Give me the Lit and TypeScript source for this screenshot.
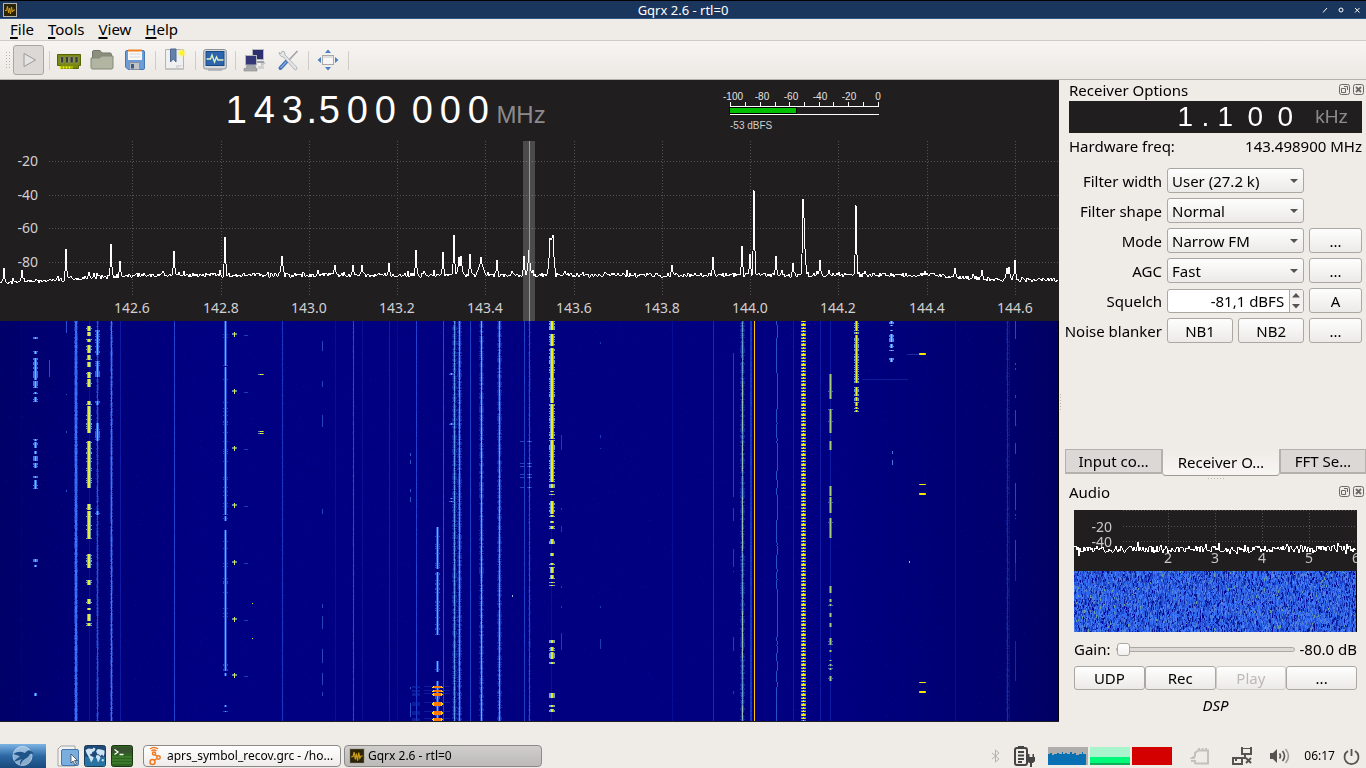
import { LitElement, html, svg, css } from "lit";
import { customElement } from "lit/decorators.js";

/* Deterministic noise source shared by the plots. */
function noise(seed: number) {
  let s = seed;
  return () => {
    s = (s * 1664525 + 1013904223) >>> 0;
    return s / 4294967296;
  };
}

type Peak = [x: number, y: number, half?: number];
type Seg = [from: number, to: number];

const PEAKS: Peak[] = [
  [4, 127], [22, 129], [66, 108], [89, 131], [111, 103], [120, 120], [174, 110], [225, 96],
  [282, 115, 2], [335, 124], [353, 124], [362, 124], [389, 122], [416, 109], [443, 111],
  [454, 94, 1], [459, 116, 2], [461, 115, 2], [470, 113], [481, 116, 4], [497, 119], [524, 115],
  [529, 109, 2], [550, 97, 2], [551, 99, 2], [552, 97, 2], [553, 94, 2], [672, 124], [713, 116], [742, 105, 1], [750, 113, 1],
  [754, 49], [776, 115], [793, 122], [803, 58, 1], [804, 77, 2], [820, 119], [829, 129],
  [856, 64, 1], [955, 127], [982, 129], [1007, 127, 2], [1009, 126, 2], [1015, 119],
];

function spectrumPoints(): string {
  const rnd = noise(7);
  const pts: string[] = [];
  for (let x = 0; x < 1059; x++) {
    let base = 134;
    if (x < 140) base = 142 - (x / 140) * 8;
    if (x > 940) base = 135 + Math.min(4, (x - 940) / 16);
    let y = base + rnd() * 4 - 2 - (rnd() > 0.94 ? 3 : 0);
    for (const [px, py, half = 1] of PEAKS) {
      const d = Math.abs(x - px);
      if (d <= half) y = Math.min(y, d === 0 ? py : base - (base - py) * (1 - d / (half + 0.6)) * 0.75);
    }
    pts.push(`${x},${Math.round(y)}`);
  }
  return pts.join(" ");
}

function audioPoints(): string {
  const rnd = noise(31);
  const pts: string[] = [];
  for (let x = 0; x < 283; x++) {
    const y = 39 + (rnd() - 0.5) * 7 + (rnd() > 0.85 ? (rnd() - 0.5) * 11 : 0);
    pts.push(`${x},${Math.round(y)}`);
  }
  return pts.join(" ");
}

const SPECTRUM = spectrumPoints();
const AUDIO = audioPoints();

/* Steady carriers: x, width, colour, strength, side fuzz. */
const CARRIERS: [number, number, string, number, number][] = [
  [75, 2, "58,122,255", 1, 0.7], [97, 1, "80,140,240", 0.65, 0.5], [111, 1, "70,130,255", 1, 0.7],
  [120, 1, "20,40,190", 0.7, 0], [174, 1, "40,80,225", 0.9, 0], [282, 1, "30,60,200", 0.95, 0.15],
  [335, 1, "14,24,160", 0.7, 0], [353, 1, "40,90,235", 0.9, 0.15], [362, 1, "14,24,160", 0.7, 0],
  [389, 1, "20,36,175", 0.9, 0], [397, 1, "14,24,160", 0.5, 0], [416, 1, "40,80,225", 0.9, 0],
  [443, 1, "40,90,235", 0.9, 0], [454, 1, "95,160,235", 1, 0.8], [459, 1, "95,160,235", 1, 0.8],
  [470, 1, "36,76,220", 0.9, 0], [481, 1, "130,185,210", 1, 0.8], [499, 1, "110,165,240", 1, 0.8],
  [524, 1, "36,76,220", 0.9, 0], [529, 1, "50,90,225", 0.9, 0.3], [672, 1, "12,22,160", 0.7, 0],
  [713, 1, "28,52,190", 0.9, 0], [742, 1, "105,165,205", 1, 0.8], [750, 2, "28,70,205", 0.9, 0],
  [793, 1, "18,32,165", 0.9, 0], [820, 1, "20,40,175", 0.8, 0], [830, 1, "20,44,180", 0.7, 0],
  [955, 1, "12,24,155", 0.7, 0], [1007, 1, "28,54,190", 0.85, 0.3], [1009, 1, "12,24,155", 0.6, 0],
  [89, 1, "20,36,170", 0.6, 0], [551, 1, "16,30,160", 0.6, 0], [21, 1, "4,6,120", 0.7, 0],
];

/* Intermittent signals; "spread" is how often the glow reaches a second pixel. */
const BURSTS: { x: number; w: number; core: string; glow?: string; spread?: number; segs: Seg[] }[] = [
  { x: 35, w: 1, core: "#8cbfb0", glow: "#3a6fe0", segs: [[16, 18], [30, 33], [37, 59], [60, 67], [71, 73], [76, 81], [118, 120], [121, 127], [130, 133], [135, 140], [142, 147], [155, 157], [159, 168], [238, 241], [244, 246], [372, 375]] },
  { x: 49, w: 1, core: "#2a50d0", segs: [[39, 56]] },
  { x: 66, w: 1, core: "#2a50d0", segs: [[0, 12], [73, 74], [110, 112], [169, 171]] },
  { x: 88, w: 2, core: "#e8ee30", glow: "#6f9fc0", spread: 0.2, segs: [[5, 10], [11, 15], [18, 21], [24, 32], [34, 39], [41, 46], [51, 57], [58, 66], [80, 84], [85, 112], [120, 167], [183, 189], [190, 218], [233, 247], [259, 264], [278, 283], [287, 289], [293, 300], [302, 305]] },
  { x: 97, w: 1, core: "#8cb8c0", glow: "#2b5fe0", segs: [[9, 34], [40, 56], [80, 84], [102, 120], [190, 194]] },
  { x: 225, w: 1, core: "#7fb0c0", glow: "#1c44c0", spread: 0.1, segs: [[0, 45], [46, 194], [195, 200], [209, 350], [352, 355], [384, 386], [390, 391]] },
  { x: 322, w: 1, core: "#2444b8", segs: [[20, 30], [60, 66], [94, 106], [188, 193], [283, 287], [295, 308], [328, 342], [352, 364], [371, 375]] },
  { x: 410, w: 1, core: "#2c54c4", segs: [[132, 135], [139, 143], [168, 171], [176, 181], [366, 368], [382, 396]] },
  { x: 437, w: 1, core: "#7eacd0", glow: "#2048c8", spread: 0.3, segs: [[206, 248], [251, 314], [340, 351], [360, 400]] },
  { x: 451, w: 1, core: "#7eacd0", glow: "#2a58d8", segs: [[52, 54], [102, 104], [177, 178], [180, 181]] },
  { x: 551, w: 2, core: "#e4ea20", glow: "#6fa0d8", segs: [[0, 9], [13, 25], [27, 82], [83, 118], [119, 161], [163, 167], [170, 171], [173, 174], [180, 193], [194, 196], [200, 202], [205, 208], [218, 223], [232, 235], [242, 244], [246, 252], [254, 258], [261, 262], [264, 265], [319, 322], [326, 330], [331, 338], [341, 343], [372, 377], [384, 386], [388, 391]] },
  { x: 733, w: 1, core: "#2040c0", segs: [[32, 176], [187, 200], [228, 246], [250, 251], [316, 330], [370, 373]] },
  { x: 742, w: 1, core: "#96bfb0", segs: [[60, 110], [120, 150], [176, 230], [290, 338], [385, 398]] },
  { x: 830, w: 1, core: "#a8cc78", glow: "#3a68c8", spread: 0.1, segs: [[53, 78], [88, 112], [120, 129], [165, 175], [176, 192], [197, 217], [265, 272], [278, 281], [283, 285], [292, 296], [302, 306], [317, 324], [329, 331], [339, 340], [343, 345], [347, 349], [355, 360]] },
  { x: 856, w: 1, core: "#f0f020", glow: "#5c96f0", segs: [[0, 10], [11, 13], [14, 62], [66, 75], [76, 80], [81, 85], [86, 88], [89, 91]] },
  { x: 891, w: 1, core: "#a0c8d8", glow: "#4a80e8", segs: [[0, 3], [4, 5], [9, 10], [13, 21], [23, 27], [29, 30], [37, 41]] },
  { x: 892, w: 1, core: "#4a78e0", segs: [[130, 133], [139, 144]] },
  { x: 1015, w: 1, core: "#2448c4", segs: [[0, 18], [42, 44], [47, 49], [74, 77], [89, 105], [122, 133], [162, 189], [193, 195], [197, 198], [219, 242]] },
  { x: 1015, w: 1, core: "#1428a0", segs: [[242, 260], [320, 360]] },
  { x: 561, w: 1, core: "#1c3cb4", segs: [[114, 129], [187, 189], [205, 211], [265, 267], [285, 287], [312, 329]] },
  { x: 600, w: 1, core: "#1c3cb4", segs: [[21, 23], [114, 117], [127, 128], [285, 287], [318, 328]] },
];

function drawWaterfall(canvas: HTMLCanvasElement) {
  const g = canvas.getContext("2d")!;
  const rnd = noise(99);
  const W = canvas.width;
  const H = canvas.height;
  const base = g.createLinearGradient(0, 0, W, 0);
  base.addColorStop(0, "#00006a");
  base.addColorStop(0.08, "#000078");
  base.addColorStop(0.2, "#000082");
  base.addColorStop(0.8, "#000080");
  base.addColorStop(0.95, "#00006e");
  base.addColorStop(1, "#000062");
  g.fillStyle = base;
  g.fillRect(0, 0, W, H);

  for (let i = 0; i < 6000; i++) {
    g.fillStyle = rnd() > 0.5 ? "rgba(20,20,160,.35)" : "rgba(0,0,90,.35)";
    g.fillRect(Math.floor(rnd() * W), Math.floor(rnd() * H), 1, 1);
  }

  for (const [x, w, rgb, strength, fuzz] of CARRIERS) {
    for (let y = 0; y < H; y++) {
      g.fillStyle = `rgba(${rgb},${strength * (0.8 + rnd() * 0.2)})`;
      g.fillRect(x, y, w, 1);
      if (fuzz > 0) {
        g.fillStyle = `rgba(44,92,224,${fuzz * (0.5 + rnd() * 0.5)})`;
        if (rnd() < fuzz + 0.1) g.fillRect(x - 1, y, 1, 1);
        if (rnd() < fuzz + 0.1) g.fillRect(x + w, y, 1, 1);
        if (fuzz > 0.7 && rnd() < 0.35) {
          g.fillStyle = "rgba(30,64,190,.6)";
          g.fillRect(x - 2, y, w + 4, 1);
          g.fillStyle = `rgb(${rgb})`;
          g.fillRect(x, y, w, 1);
        }
      }
    }
  }

  for (const { x, w, core, glow, spread = 0.5, segs } of BURSTS) {
    for (const [a, b] of segs) {
      for (let y = a; y < b; y++) {
        if (glow) {
          const reach = rnd() < spread ? 2 : 1;
          g.fillStyle = glow;
          g.fillRect(x - reach, y, w + reach * 2, 1);
        }
        g.fillStyle = core;
        g.fillRect(x, y, w, 1);
      }
    }
  }
  g.fillStyle = "#f4f000";
  for (const [a, b] of [[0, 9], [14, 25], [28, 82], [84, 118], [120, 161], [181, 193]]) g.fillRect(551, a, 2, b - a);

  /* wandering carrier */
  g.fillStyle = "#2452c8";
  let wx = 776;
  for (let y = 0; y < H; y++) {
    if (rnd() > 0.94) wx = wx === 776 ? 777 : 776;
    g.fillRect(wx, y, 1, 1);
  }

  /* pulsed carrier */
  for (let y = 0; y < H; y++) {
    const p = y % 10;
    if (p === 0 || p === 3 || p === 4 || p === 7) {
      g.fillStyle = "#8aaec8";
      g.fillRect(801, y, 5, 1);
      g.fillStyle = "#f6f000";
      g.fillRect(802, y, 3, 1);
    } else if (p === 2 || p === 6 || p === 9) {
      g.fillStyle = "#e8ee30";
      g.fillRect(803, y, 1, 1);
      g.fillStyle = "#3060d0";
      g.fillRect(801, y, 2, 1);
      g.fillRect(804, y, 2, 1);
    }
  }

  g.fillStyle = "#ffc400";
  g.fillRect(754, 0, 1, H);

  for (const y of [13, 70, 127, 184, 241, 298, 354]) {
    g.fillStyle = "#5c8cc8";
    g.fillRect(232, y - 1, 5, 2);
    g.fillStyle = "#dcea50";
    g.fillRect(234, y - 2, 1, 5);
    g.fillStyle = "#1c40b4";
    g.fillRect(244, y + 1, 4, 1);
  }
  for (const [y, h] of [[53, 1], [110, 1], [112, 1]]) {
    g.fillStyle = "#6090c0";
    g.fillRect(258, y, 6, h);
    g.fillStyle = "#e0ea40";
    g.fillRect(260, y, 3, h);
  }
  g.fillStyle = "#e0ea40";
  g.fillRect(252, 282, 1, 1);
  g.fillRect(252, 317, 1, 1);
  for (const [y, h] of [[32, 2], [163, 1], [172, 2], [361, 1], [370, 2]]) {
    g.fillStyle = "#90b8c0";
    g.fillRect(919, y, 7, h);
    g.fillStyle = "#f8e800";
    g.fillRect(920, y, 5, h);
  }
  for (const y of [120, 142, 145, 153, 156, 166]) {
    g.fillStyle = "#2044c0";
    g.fillRect(520, y, 5, 1);
    g.fillRect(527, y, 5, 1);
    g.fillStyle = "#80b0c0";
    g.fillRect(529, y, 1, 1);
  }
  g.fillStyle = "#1428a0";
  g.fillRect(907, 33, 12, 1);
  g.fillStyle = "#0c1c98";
  g.fillRect(862, 58, 46, 1);
  g.fillStyle = "#9cc0e0";
  g.fillRect(909, 240, 1, 2);
  g.fillRect(512, 274, 1, 2);

  /* overloaded transmissions at the bottom edge */
  for (const [y, h] of [[365, 2], [369, 2], [372, 3], [381, 4], [390, 4], [397, 3]]) {
    g.fillStyle = "rgba(24,54,180,.5)";
    g.fillRect(412, y, 8, h);
    g.fillRect(424, y, 26, 1);
    g.fillStyle = "#f8e000";
    g.fillRect(433, y, 9, h);
    g.fillRect(432, y + 1, 11, Math.max(1, h - 2));
    g.fillStyle = "#ff7800";
    g.fillRect(434, y, 7, h);
  }
  g.fillStyle = "#000";
  g.fillRect(W - 1, 0, 1, H);
}

function drawAudioWaterfall(canvas: HTMLCanvasElement) {
  const g = canvas.getContext("2d")!;
  const rnd = noise(5);
  const tones = ["#0a1a96", "#1a3cc0", "#2450d4", "#2c60e8", "#2f68f0", "#3c78f8", "#3468e4", "#2048c8", "#5080d8"];
  for (let x = 0; x < canvas.width; x++) {
    let y = 0;
    while (y < canvas.height) {
      const run = 1 + Math.floor(rnd() * 3);
      const r = rnd();
      g.fillStyle = r > 0.985 ? "#68a098" : r < 0.03 ? "#0000a0" : tones[Math.floor(rnd() * tones.length)];
      g.fillRect(x, y, 1, run);
      y += run;
    }
  }
  g.fillStyle = "#000";
  g.fillRect(canvas.width - 1, 0, 1, canvas.height);
}

const pct = (n: number, of: number) => `${(n / of) * 100}%`;

const logo = svg`
  <rect x="0.5" y="0.5" width="13" height="13" fill="#2c2408" stroke="#b8b4ac"/>
  <path d="M2 7.5h1.500l1-4 1 6.500 1-5 1 6 1-7 1 5 1-2h1.500" fill="none" stroke="#d0a01c"/>`;

const icons = {
  play: svg`<path d="M7 5.500v13l11.500-6.500z" fill="#e6e4e2" stroke="#9c9a98" stroke-linejoin="round"/>`,
  card: svg`
    <path d="M.5 6.500h23v11h-2v3h-18v-3h-3z" fill="#7a8a10" stroke="#566408"/>
    <path d="M2.500 19.500h13" stroke="#e8f000" stroke-width="2.500" stroke-dasharray="2 1"/>
    <g fill="#3a3c40" stroke="#a0a478" stroke-width=".7"><rect x="3.500" y="8.500" width="3.200" height="6.500" rx="1"/><rect x="8.300" y="8.500" width="3.200" height="6.500" rx="1"/><rect x="13.100" y="8.500" width="3.200" height="6.500" rx="1"/><rect x="17.900" y="8.500" width="3.200" height="6.500" rx="1"/></g>`,
  folder: svg`
    <path d="M2.500 20V4q0-1.500 1.500-1.500h6L12 5h8q1.500 0 1.500 1.500V20z" fill="#8c8f7c" stroke="#72756a"/>
    <path d="M1 10h8.500l2-2H23v11.500q0 1.500-1.500 1.500h-19Q1 21 1 19.500z" fill="#b2b5a2" stroke="#83867a"/>`,
  save: svg`
    <path d="M4 2.500h16q1.500 0 1.500 1.500v16q0 1.500-1.500 1.500H5L2.500 19V4Q2.500 2.500 4 2.500z" fill="#6c9cd4" stroke="#4878b4"/>
    <path d="M5 2h14v10H5z" fill="#f8f8f8"/><path d="M5 1.500h14v2H5z" fill="#f08020"/>
    <path d="M6.500 6h11M6.500 9h11" stroke="#d8d8d8"/>
    <path d="M6.500 14.500h10v7h-10z" fill="#c0c4c8" stroke="#8890a0"/><path d="M8 16h3v4.500H8z" fill="#3c5c88"/>`,
  bookmark: svg`
    <path d="M2.500 1.500h18v20h-18z" fill="#f0f0f0" stroke="#b4b4b4"/>
    <path d="M13 21v-4h7z" fill="#d8d8d8"/><path d="M2 20h19v2H2z" fill="#c4c4c4"/>
    <path d="M7.500 1h5.500v13l-2.700-3-2.800 3z" fill="#6482ac" stroke="#4c6890"/>
    <circle cx="19" cy="5" r="3.800" fill="#f8f060" opacity=".6"/><circle cx="19" cy="5" r="2.200" fill="#fff420"/>`,
  monitor: svg`
    <rect x=".7" y="1.500" width="22.600" height="19.500" rx="2" fill="#d8dade" stroke="#8c9096"/>
    <rect x="3" y="3.500" width="18" height="14" fill="#2c64b0" stroke="#184880"/>
    <path d="M3.500 11h4l1.500-4 2.500 7 2-5 1.500 3h5.500" fill="none" stroke="#e0f0c0" stroke-width="1.400"/>
    <path d="M5 22h14" stroke="#a8acb0" stroke-width="1.500"/>`,
  network: svg`
    <path d="M18 12l5 3-5 4z" fill="#c4c8cc"/>
    <rect x="9.500" y="1.500" width="11" height="10" fill="#2c3070" stroke="#b4b8bc"/>
    <path d="M13 13h8v2h-8z" fill="#9ca0a4"/>
    <rect x="2.500" y="7.500" width="11" height="9.500" fill="#343878" stroke="#b4b8bc"/>
    <path d="M4 17.500h8l1 2H3zM1 20.500h13v2.500H1z" fill="#a8aaac" stroke="#84888c" stroke-width=".6"/>
    <path d="M15 18h6v3h-6z" fill="#c8cacc" opacity=".8"/>`,
  tools: svg`
    <path d="M21.500 3l-9 9.500" stroke="#a0a4a8" stroke-width="1.600"/>
    <path d="M10.500 13.500l-6 6.500" stroke="#4070b4" stroke-width="4" stroke-linecap="round"/>
    <path d="M10 14l-5 5.500" stroke="#84ace0" stroke-width="1.300" stroke-linecap="round"/>
    <path d="M3 4.500l2 1L6.500 3Q9.500 3 9 7L20.500 19q1 1.500 0 2.500t-2.500-.5L7.500 9Q4 9 3 4.500z" fill="#e4e6e8" stroke="#a0a4a8" stroke-width=".8"/>`,
  fit: svg`
    <rect x="6.500" y="7.500" width="11" height="9" fill="#f6f6f6" stroke="#a8a8a8"/><path d="M6.500 9h11" stroke="#c8c8c8"/>
    <path d="M12 1.500l3 3.500H9zM12 22.500l3-3.500H9zM1.500 12L5 9v6zM22.500 12L19 9v6z" fill="#4c80c4"/>`,
};

type Tool = keyof typeof icons | "|";
const TOOLS: [Tool, string][] = [
  ["|", ""], ["card", "Configure I/O devices"], ["folder", "Load settings"], ["save", "Save settings"],
  ["|", ""], ["bookmark", "Bookmark"], ["|", ""], ["monitor", "DSP"], ["|", ""],
  ["network", "Remote control"], ["tools", "Remote settings"], ["|", ""], ["fit", "Full screen"], ["|", ""],
];

@customElement("gqrx-dock-title")
class DockTitle extends LitElement {
  static properties = { label: {} };
  declare label: string;
  static styles = css`
    :host { display: flex; align-items: center; height: 20px; }
    .name { flex: 1; }
    .act { width: 12px; height: 12px; padding: 0; margin-left: 2px; border: 0; background: none; display: block; }
    svg { display: block; }
  `;
  render() {
    return html`<span class="name">${this.label}</span>
      <button class="act" aria-label="Float"><svg width="12" height="12" fill="none" stroke="#6a6866">
        <rect x=".5" y=".5" width="10" height="10" rx="2"/><path d="M5 2.500h3.500V6M2.500 4.500h4v4h-4z"/></svg></button>
      <button class="act" aria-label="Close"><svg width="12" height="12" fill="none" stroke="#6a6866">
        <rect x=".5" y=".5" width="10" height="10" rx="2"/><path d="M3 3l5 5M8 3l-5 5" stroke-width="1.800"/></svg></button>`;
  }
}

@customElement("app-root")
class AppRoot extends LitElement {
  static styles = css`
    :host {
      display: flex; flex-direction: column; min-height: 100vh;
      background: #efebe7; color: #000;
      font: 15px/20px "Noto Sans", "Open Sans", sans-serif;
    }
    * { box-sizing: border-box; }
    button, select, input { font: inherit; color: inherit; margin: 0; }
    svg { display: block; }

    .title {
      display: grid; grid-template-columns: 1fr auto 1fr; align-items: center; height: 19px; padding: 0 3px;
      background: #1b365d; border-top: 1px solid #000; border-bottom: 1px solid #2c5688;
      color: #fff; font-size: 13px; line-height: 16px;
    }
    .wm { display: flex; justify-content: flex-end; gap: 4px; }
    .wm button { width: 12px; height: 12px; padding: 0; border: 0; background: none; }
    .menu { display: flex; height: 22px; padding: 0 3px; border-bottom: 1px solid #cfcbc7; }
    .menu button { padding: 0 7px; border: 0; background: none; line-height: 21px; }
    .mn { text-decoration: underline; text-decoration-thickness: 2px; text-underline-offset: 2px; }
    .tools {
      display: flex; align-items: center; height: 39px; padding: 0 5px;
      background: linear-gradient(#f7f5f2, #ece8e4); border-bottom: 1px solid #b4b0ac;
    }
    .grip { width: 6px; height: 18px; margin-right: 2px; background: radial-gradient(circle, #b8b4b0 1px, transparent 1px) 0 0 / 3px 3px; }
    .play { width: 31px; height: 30px; padding: 0 3px; margin-right: 2px; border: 1px solid #aaa6a2; border-radius: 3px; background: #dcd8d5; }
    .tool { width: 33px; height: 30px; padding: 0 4px; border: 0; background: none; }
    .sep { width: 1px; height: 19px; margin: 0 3px; background: #d0ccc8; }

    .main { display: flex; flex: 1; }
    .radio { flex: 1; min-width: 0; display: flex; flex-direction: column; background: #201e1f; }
    .head { display: flex; height: 61px; padding-left: 21%; }
    .freq { display: flex; align-items: baseline; color: #fff; font: 38px/60px "Liberation Sans", sans-serif; }
    .freq .d { width: 28px; text-align: center; }
    .freq .p { width: 9px; text-align: center; }
    .freq .u { margin-left: 4px; font-size: 24px; color: #8c8a8c; }
    .meter { margin-left: 172px; font: 10px "Liberation Sans", sans-serif; }
    .spectrum { width: 100%; height: 180px; font-size: 14px; }
    .fall { display: block; width: 100%; height: 400px; flex: 1 1 400px; min-height: 0; image-rendering: pixelated; }
    .foot { height: 1px; }
    .split { width: 6px; display: flex; align-items: center; background: #efebe7; }
    .dots { width: 3px; height: 17px; background: radial-gradient(circle, #b8b4b0 1px, transparent 1px) 0 0 / 3px 3px; }

    .side { width: 301px; display: flex; flex-direction: column; }
    .dock { padding: 0 1px 0 4px; }
    .rx { padding: 1px 4px 0; }
    .lcd {
      display: flex; justify-content: flex-end; align-items: center; height: 32px; padding-right: 14px;
      background: #201e1f; color: #fff; font: 28px/32px "Liberation Sans", sans-serif;
    }
    .lcd .d { width: 30px; text-align: center; }
    .lcd .p { width: 10px; text-align: center; }
    .lcd .u { margin-left: 15px; font-size: 19px; color: #8c8a8c; }
    .hw { display: flex; justify-content: space-between; padding: 3px 0 12px; }
    .form { display: grid; grid-template-columns: 93px 5fr 5fr 4fr; gap: 5px; align-items: center; }
    .form label, .form .lb { justify-self: end; white-space: nowrap; }
    .wide { grid-column: span 2; }
    .end { grid-column: 4; }
    .btn, .pick select {
      height: 25px; width: 100%; padding: 0; border: 1px solid #aba7a3; border-radius: 3px;
      background: linear-gradient(#fefefe, #eceae8); text-align: center; line-height: 20px;
    }
    .pick { position: relative; }
    .pick select { display: block; appearance: none; padding: 0 4px; text-align: left; }
    .pick::after {
      content: ""; position: absolute; right: 6px; top: 11px;
      border: 4px solid transparent; border-top-color: #55534f; border-bottom: 0;
    }
    .spin { display: flex; height: 24px; border: 1px solid #aba7a3; border-radius: 3px; background: #fff; overflow: hidden; }
    .spin input { flex: 1; min-width: 0; border: 0; padding: 0 5px; text-align: right; background: none; }
    .steps { display: flex; flex-direction: column; width: 14px; border-left: 1px solid #aba7a3; background: #f4f2f0; }
    .steps button { flex: 1; padding: 0 2px; border: 0; background: none; display: flex; align-items: center; }
    .gap { flex: 1; }
    .tabs { display: flex; align-items: flex-start; height: 27px; margin-top: 16px; }
    .tab { flex: 97 1 0; height: 25px; padding: 0; border: 1px solid #b4b0ac; border-bottom-width: 2px; background: #dbd8d5; white-space: nowrap; line-height: 20px; }
    .tab.on { flex-grow: 118; height: 27px; border-top: 0; border-bottom: 1px solid #9c9894; border-radius: 0 0 4px 4px; background: linear-gradient(#efebe7, #f8f6f3); }
    .tab.last { flex-grow: 86; }
    .hgrip { width: 17px; height: 3px; margin: 1px auto 2px; background: radial-gradient(circle, #b8b4b0 1px, transparent 1px) 0 0 / 3px 3px; }
    .audio { padding: 8px 9px 7px; }
    .aspec { width: 100%; height: 61px; background: #201e1f; font-size: 14px; }
    .afall { display: block; width: 100%; height: 61px; image-rendering: pixelated; }
    .gain { display: flex; align-items: center; gap: 5px; height: 34px; }
    .gain input { flex: 1; min-width: 0; appearance: none; height: 15px; background: none; }
    .gain input::-webkit-slider-runnable-track { height: 5px; border: 1px solid #aba7a3; border-radius: 3px; background: #dcd9d6; }
    .gain input::-webkit-slider-thumb { appearance: none; width: 13px; height: 13px; margin-top: -5px; border: 1px solid #aba7a3; border-radius: 3px; background: linear-gradient(#fff, #f2f0ee); }
    .row { display: flex; height: 24px; }
    .row .btn { height: 24px; flex: 1; }
    .row .btn:disabled { color: #bdb9b5; border-color: #cfcbc7; }
    .dsp { font-style: italic; text-align: center; margin-top: 5px; }
    .status { height: 22px; }

    .bar { display: flex; align-items: center; height: 24px; font-size: 12px; line-height: 16px; }
    .start { width: 46px; height: 24px; padding: 0 10px; margin-right: 11px; border: 0; background: linear-gradient(#7db4e4, #2c68a4 50%, #184a7c); }
    .quick { width: 22px; height: 22px; padding: 0; margin-right: 5px; border: 0; background: none; }
    .tasks { display: flex; gap: 3px; margin-left: 5px; }
    .task {
      display: flex; align-items: center; gap: 3px; width: 198px; height: 22px; padding: 0 4px;
      border: 1px solid #8c8a88; border-radius: 4px; background: linear-gradient(#fff, #eeecea); white-space: nowrap;
    }
    .task.on { background: linear-gradient(#d0cecc, #bcbab8); }
    .tray { display: flex; align-items: center; margin-left: auto; padding-right: 6px; }
    .t1 { margin-right: 12px; } .t2 { margin-right: 12px; } .t3 { margin-right: 18px; } .t4 { margin-right: 21px; }
    .t5 { margin-right: 16px; } .t6 { margin-right: 13px; } .clock { margin-right: 8px; }
  `;

  firstUpdated() {
    drawWaterfall(this.renderRoot.querySelector<HTMLCanvasElement>(".fall")!);
    drawAudioWaterfall(this.renderRoot.querySelector<HTMLCanvasElement>(".afall")!);
  }

  private icon(name: keyof typeof icons) {
    return html`<svg width="24" height="24" viewBox="0 0 24 24" fill="none">${icons[name]}</svg>`;
  }

  private spectrum() {
    const xs = [132, 221, 309, 397, 485, 574, 662, 750, 838, 927, 1015];
    return html`<svg class="spectrum" role="img" aria-label="Spectrum">
      <g stroke="#565456" stroke-dasharray="1 2" shape-rendering="crispEdges">
        ${xs.map((x) => svg`<line x1=${pct(x + 0.5, 1059)} x2=${pct(x + 0.5, 1059)} y1="0" y2="155"/>`)}
        ${[20, 54, 87, 121].map((y) => svg`<line x1="49" x2="100%" y1=${y + 0.5} y2=${y + 0.5}/>`)}
      </g>
      <rect x=${pct(523, 1059)} y="0" width=${pct(12, 1059)} height="180" fill="#fff" opacity=".2"/>
      <svg width="100%" height="180" viewBox="0 0 1059 180" preserveAspectRatio="none">
        <polyline points=${SPECTRUM} fill="none" stroke="#fff" shape-rendering="crispEdges"/>
      </svg>
      <rect x=${pct(529, 1059)} y="0" width="1" height="180" fill="#ff7171"/>
      <g fill="#d2d0d2">
        ${[20, 54, 87, 121].map((y, i) => svg`<text x="38" y=${y + 5} text-anchor="end">${-20 * (i + 1)}</text>`)}
        ${xs.map((x, i) => svg`<text x=${pct(x, 1059)} y="172" text-anchor="middle">${(142.6 + i * 0.2).toFixed(1)}</text>`)}
      </g>
    </svg>`;
  }

  private meter() {
    return html`<svg class="meter" width="165" height="61" role="img" aria-label="Signal level">
      <g fill="#e4e2e4" text-anchor="middle">
        ${[-100, -80, -60, -40, -20, 0].map((v, i) => svg`<text x=${15 + i * 29} y="20">${v}</text>`)}
      </g>
      <path d="M12.500 22v4M27.500 22v4M42.500 22v4M57.500 22v4M71.500 22v4M86.500 22v4M101.500 22v4M115.500 22v4M130.500 22v4M145.500 22v4M160.500 22v4M12 26.500h149M12 34.500h149" stroke="#fff" shape-rendering="crispEdges"/>
      <rect x="11.500" y="27.500" width="67" height="6" fill="#00be00" stroke="#000" shape-rendering="crispEdges"/>
      <text x="12" y="49" fill="#d0ced0">-53 dBFS</text>
    </svg>`;
  }

  private pick(id: string, label: string, value: string) {
    return html`<label for=${id}>${label}</label>
      <div class="pick wide"><select id=${id}><option>${value}</option></select></div>`;
  }

  render() {
    const digits = (t: string) => [...t].map((c) => html`<span class=${/\d/.test(c) ? "d" : "p"}>${c}</span>`);
    return html`
      <header class="title">
        <svg width="14" height="14">${logo}</svg>
        <span>Gqrx 2.6 - rtl=0</span>
        <span class="wm">
          <button aria-label="Minimize"><svg width="12" height="12"><path d="M4 8.500L8 4" stroke="#fff"/></svg></button>
          <button aria-label="Maximize"><svg width="12" height="12"><circle cx="6" cy="6" r="2" fill="none" stroke="#fff"/></svg></button>
          <button aria-label="Close"><svg width="12" height="12"><path d="M4 4l4.500 4.500M8.500 4L4 8.500" stroke="#fff"/></svg></button>
        </span>
      </header>
      <nav class="menu">
        ${["File", "Tools", "View", "Help"].map((m) => html`<button><span class="mn">${m[0]}</span>${m.slice(1)}</button>`)}
      </nav>
      <div class="tools">
        <div class="grip"></div>
        <button class="play" aria-label="Start DSP">${this.icon("play")}</button>
        ${TOOLS.map(([t, label]) => t === "|"
          ? html`<span class="sep"></span>`
          : html`<button class="tool" aria-label=${label}>${this.icon(t)}</button>`)}
      </div>

      <main class="main">
        <section class="radio">
          <div class="head">
            <div class="freq">${digits("143.500 000")}<span class="u">MHz</span></div>
            ${this.meter()}
          </div>
          ${this.spectrum()}
          <canvas class="fall" width="1059" height="400"></canvas>
          <div class="foot"></div>
        </section>
        <div class="split"><div class="dots"></div></div>
        <aside class="side">
          <gqrx-dock-title class="dock" label="Receiver Options"></gqrx-dock-title>
          <div class="rx">
            <div class="lcd">${digits("1.100")}<span class="u">kHz</span></div>
            <div class="hw"><span>Hardware freq:</span><span>143.498900 MHz</span></div>
            <div class="form">
              ${this.pick("fw", "Filter width", "User (27.2 k)")}
              <span class="end"></span>
              ${this.pick("fs", "Filter shape", "Normal")}
              <span class="end"></span>
              ${this.pick("mode", "Mode", "Narrow FM")}
              <button class="btn" aria-label="Mode options">...</button>
              ${this.pick("agc", "AGC", "Fast")}
              <button class="btn" aria-label="AGC options">...</button>
              <label for="sql">Squelch</label>
              <div class="spin wide">
                <input id="sql" type="text" value="-81,1 dBFS">
                <div class="steps">
                  <button aria-label="Increase"><svg width="9" height="5"><path d="M0 4.500h8L4 0z" fill="#55534f"/></svg></button>
                  <button aria-label="Decrease"><svg width="9" height="5"><path d="M0 0h8L4 4.500z" fill="#55534f"/></svg></button>
                </div>
              </div>
              <button class="btn">A</button>
              <span class="lb">Noise blanker</span>
              <button class="btn">NB1</button>
              <button class="btn">NB2</button>
              <button class="btn" aria-label="Noise blanker options">...</button>
            </div>
          </div>
          <div class="gap"></div>
          <div class="tabs">
            <button class="tab">Input co…</button>
            <button class="tab on">Receiver O…</button>
            <button class="tab last">FFT Se…</button>
          </div>
          <div class="hgrip"></div>
          <gqrx-dock-title class="dock" label="Audio"></gqrx-dock-title>
          <div class="audio">
            <svg class="aspec" role="img" aria-label="Audio spectrum">
              <g stroke="#565456" stroke-dasharray="1 2" shape-rendering="crispEdges">
                ${[94, 141, 188, 235].map((x) => svg`<line x1=${pct(x + 0.5, 283)} x2=${pct(x + 0.5, 283)} y1="0" y2="38"/>`)}
                ${[0, 16, 31].map((y) => svg`<line x1="49" x2="100%" y1=${y + 0.5} y2=${y + 0.5}/>`)}
              </g>
              <g fill="#c8c6c8">
                <text x="38" y="22" text-anchor="end">-20</text>
                <text x="38" y="37" text-anchor="end">-40</text>
                ${[2, 3, 4, 5, 6].map((n) => svg`<text x=${pct(94 + (n - 2) * 47, 283)} y="53" text-anchor="middle">${n}</text>`)}
              </g>
              <svg width="100%" height="61" viewBox="0 0 283 61" preserveAspectRatio="none">
                <polyline points=${AUDIO} fill="none" stroke="#fff" shape-rendering="crispEdges"/>
              </svg>
            </svg>
            <canvas class="afall" width="283" height="61"></canvas>
            <div class="gain">
              <label for="gain">Gain:</label>
              <input id="gain" type="range" min="-80" max="50" value="-80">
              <span>-80.0 dB</span>
            </div>
            <div class="row">
              <button class="btn">UDP</button>
              <button class="btn">Rec</button>
              <button class="btn" disabled>Play</button>
              <button class="btn" aria-label="Audio options">...</button>
            </div>
            <div class="dsp">DSP</div>
          </div>
        </aside>
      </main>
      <div class="status"></div>

      <footer class="bar">
        <button class="start" aria-label="Start menu"><svg width="26" height="22">
          <circle cx="12.500" cy="11" r="9.500" fill="#b4d0e8" opacity=".7" stroke="#e4f0fa"/>
          <path d="M3 9q5-3 9-2l3 1q3-4 6-2l3 2.500-4 .5q-1 3-5 5-4 2-4.500 6.500Q9 17 12 14L3.500 17Q7 13 10 11.500 7 9.500 3 9z" fill="#1f5488"/>
        </svg></button>
        <button class="quick" aria-label="Files"><svg width="22" height="22">
          <path d="M1 4l3-3h14v20H1z" fill="#f2f2f2" stroke="#a4a4a4"/><rect x="4.500" y="4.500" width="17" height="16" rx="1.500" fill="#7aaede" stroke="#4478ac"/>
          <path d="M14 9v9l2-2 2 4 1.500-1-2-3.500h3z" fill="#fff" stroke="#333" stroke-width=".7"/></svg></button>
        <button class="quick" aria-label="Browser"><svg width="22" height="22">
          <rect x=".5" y=".5" width="21" height="21" rx="2" fill="#1f4a78" stroke="#1c3c5c"/>
          <path d="M1 12h20v9H1z" fill="#2c84b4" opacity=".7"/>
          <path d="M1.500 5l3-1.500 4 .5 1-1.500 2 1-1 2.500-2 1-1 2-2 .5 1.500 1.500 2.500 1-.5 2.500-2 3-1-3-1.500-3L2.500 8zM12 6l2-2 3 .5 3.500 1v3l-1 3-1.500-2-1.500 1.500-2-2-1 .5zM12 10.500l2.500-.5 2 2-1 3-1.500 2.500-1-3.500-1-1.500zM18 14l2 .5-.5 2-2-.5z" fill="#cce4f4"/></svg></button>
        <button class="quick" aria-label="Terminal"><svg width="22" height="22">
          <rect x=".5" y=".5" width="21" height="21" rx="2" fill="#2c6420" stroke="#1c3414"/><path d="M1 2h20v6H1z" fill="#3c4438" opacity=".6"/>
          <path d="M1 12h20M1 15h20M1 18h20" stroke="#4c8c38"/><path d="M3.500 4.500l3.500 2.500-3.500 2.500M8.500 9.500h4" fill="none" stroke="#fff" stroke-width="1.300"/></svg></button>
        <div class="tasks">
          <button class="task">
            <svg width="16" height="20" fill="none" stroke="#f07820" stroke-width="1.500">
              <path d="M2 3q4-3 8 0M3.500 5q2.500-2 5 0"/><circle cx="6" cy="7.500" r="1.500"/><circle cx="10.500" cy="11.500" r="1.700"/><circle cx="4.500" cy="16" r="2.500"/><path d="M7 8.500l2.500 2M9 12.500l-3 2"/></svg>
            <span>aprs_symbol_recov.grc - /ho...</span>
          </button>
          <button class="task on"><svg width="16" height="16" viewBox="0 0 14 14">${logo}</svg><span>Gqrx 2.6 - rtl=0</span></button>
        </div>
        <div class="tray">
          <svg class="t1" width="10" height="14" fill="none" stroke="#b4b0ac"><path d="M1 4l7 6-3.500 3V1L8 4l-7 6"/></svg>
          <svg class="t2" width="23" height="22"><path d="M5 1h6v2H5z" fill="#444"/><rect x="2" y="3" width="12" height="17" rx="2" fill="none" stroke="#444" stroke-width="2"/>
            <path d="M5 7h6M5 10.500h6M5 14h6M5 17h4" stroke="#444" stroke-width="2"/><path d="M14 12h8v4l-2 2h-1v4h-2v-4h-1l-2-2zM15 9h1.500v3H15zM19.500 9H21v3h-1.500z" fill="#444"/></svg>
          <svg class="t3" width="124" height="18">
            <rect width="40" height="18" fill="#b0aeac"/><path d="M0 18V7h2V6h2v2h2V7h3V6h2v1h3V5h1v2h2V6h2v1h3V5h2v2h2V6h2v2h3V7h3V5h1v2h3v11z" fill="#0a70b4"/>
            <rect x="42" width="40" height="18" fill="#a8f4cc"/><rect x="42" y="10" width="40" height="6" fill="#00f878"/><rect x="42" y="16" width="40" height="2" fill="#10b058"/>
            <rect x="84" width="40" height="18" fill="#d40000"/></svg>
          <svg class="t4" width="20" height="18" fill="none" stroke="#c4c0bc" stroke-width="2"><path d="M5 16.500h13V3.500H8L5 6v3l-3 2h3M1 14h4v3M9 3V1M12.500 3V1M16 3V1"/></svg>
          <svg class="t5" width="22" height="18" fill="none" stroke="#55534f" stroke-width="2"><path d="M11 0v7h9V0M14 8v3H5v3"/><rect x="2" y="11" width="9" height="6"/><path d="M12 1.500h7" stroke-width="1"/><path d="M15 11l5 5M20 11l-5 5"/></svg>
          <svg class="t6" width="22" height="16" fill="none"><path d="M1 5h3l4-4v14l-4-4H1z" fill="#55534f"/><path d="M10.500 5.500q2 2.500 0 5M13.500 3q4 5 0 10" stroke="#55534f" stroke-width="1.600"/><path d="M16.500 1q6 7 0 14" stroke="#a09e9a" stroke-width="1.600"/></svg>
          <span class="clock">06:17</span>
          <svg width="17" height="17" fill="none" stroke="#55534f" stroke-width="1.800"><path d="M5 3a7 7 0 1 0 7 0M8.500 1v7"/></svg>
        </div>
      </footer>`;
  }
}
